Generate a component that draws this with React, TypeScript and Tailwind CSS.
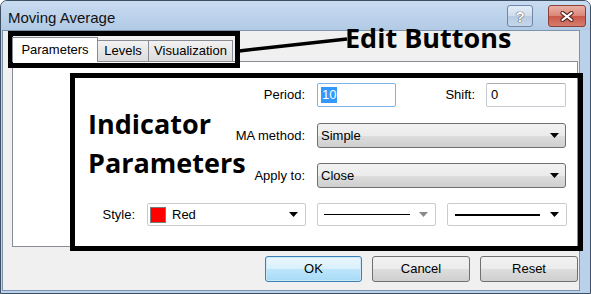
import type { ReactNode } from 'react';

const winBtn =
  'bg-[linear-gradient(#f2f2f2_0%,#ebebeb_50%,#dddddd_51%,#cfcfcf_100%)] border border-[#707070] rounded-[3px]';

function Arrow({ color = '#000' }: { color?: string }) {
  return (
    <svg width="9" height="5" viewBox="0 0 9 5" className="shrink-0">
      <path d="M0 0 H9 L4.5 5 Z" fill={color} />
    </svg>
  );
}

function Combo({ children, width }: { children: ReactNode; width: string }) {
  return (
    <div className={`${width} h-[25px] ${winBtn} flex items-center pl-[3px] pr-[6px] text-[13px] text-black`}>
      <span className="flex-1">{children}</span>
      <Arrow />
    </div>
  );
}

function StyleBox({ children, width, arrow }: { children: ReactNode; width: string; arrow?: string }) {
  return (
    <div className={`${width} h-[23px] bg-white border border-[#c8cbd0] rounded-[2px] flex items-center pl-[2px] pr-[7px]`}>
      <div className="flex-1 flex items-center">{children}</div>
      <Arrow color={arrow} />
    </div>
  );
}

function Button({ label, primary }: { label: string; primary?: boolean }) {
  return (
    <button
      className={
        primary
          ? 'w-[97px] h-[26px] rounded-[3px] border border-[#3c7fb1] bg-[linear-gradient(#eaf6fd_0%,#d9f0fc_50%,#bee6fd_51%,#a7d9f5_100%)] shadow-[inset_0_0_0_1px_#c9e9fb] text-[13px] text-black'
          : `w-[98px] h-[26px] ${winBtn} text-[13px] text-black`
      }
    >
      {label}
    </button>
  );
}

export default function App() {
  return (
    <div className="relative w-[591px] h-[294px] bg-[#b9d1ea] border border-[#3f4f63] rounded-t-[7px] flex flex-col overflow-hidden font-['Liberation_Sans',Arial,sans-serif]">
      {/* Title bar */}
      <div className="h-[29px] flex bg-linear-to-b from-[#c8dcf1] to-[#b2cae5]">
        <span className="pl-[7px] pt-[9px] leading-[15px] text-[15px] text-[#111]">Moving Average</span>
        <div className="ml-auto mr-[4px] mt-[4px] flex gap-[15px]">
          <div className="w-[26px] h-[22px] rounded-[3px] border border-[#6f88a8] bg-[linear-gradient(#e4edf7_0%,#cfdcec_50%,#b8cbe2_51%,#c6d6ea_100%)] flex items-center justify-center">
            <span className="text-[15px] font-bold leading-none text-white [text-shadow:0_0_1px_#333,0_0_1px_#333]">?</span>
          </div>
          <div className="w-[38px] h-[22px] rounded-[3px] border border-[#8c3e33] bg-[linear-gradient(#eab1a6_0%,#d98577_50%,#c9584a_51%,#d57c6e_100%)] flex items-center justify-center">
            <svg width="14" height="11" viewBox="0 0 14 11">
              <path d="M2.5 2 L11.5 9 M11.5 2 L2.5 9" stroke="#5b2620" strokeWidth="4.2" strokeLinecap="round" />
              <path d="M2.5 2 L11.5 9 M11.5 2 L2.5 9" stroke="#fff" strokeWidth="2.2" strokeLinecap="round" />
            </svg>
          </div>
        </div>
      </div>

      {/* Dialog body */}
      <div className="flex-1 ml-[1px] mr-[10px] mb-[2px] bg-[#f0f0f0] border border-[#7d93ad] flex flex-col pl-[9px] pr-[1px] pt-[6px]">
        {/* Tabs */}
        <div className="h-[24px] flex items-end text-[13px] text-black">
          <div className="relative z-10 w-[86px] h-[25px] -mb-[1px] bg-white border border-b-0 border-[#898c95] flex items-center justify-center">
            Parameters
          </div>
          <div className="w-[51px] h-[21px] bg-linear-to-b from-[#f2f2f2] to-[#dcdcdc] border-t border-r border-[#898c95] flex items-center justify-center">
            Levels
          </div>
          <div className="w-[84px] h-[21px] bg-linear-to-b from-[#f2f2f2] to-[#dcdcdc] border-t border-r border-[#898c95] flex items-center justify-center">
            Visualization
          </div>
        </div>

        {/* Panel */}
        <div className="h-[186px] bg-white border border-[#898c95] flex flex-col pt-[21px] text-[13px] text-black">
          <div className="flex items-center h-[24px]">
            <span className="w-[292px] text-right">Period:</span>
            <div className="ml-[12px] w-[79px] h-[24px] border border-[#7eb4ea] rounded-[2px] flex items-center pl-[3px]">
              <span className="bg-[#3399ff] text-white leading-[16px] px-[1px]">10</span>
            </div>
            <span className="w-[79px] text-right">Shift:</span>
            <div className="ml-[11px] w-[80px] h-[24px] border border-[#c5cad1] border-t-[#abadb3] rounded-[2px] flex items-center pl-[4px]">
              0
            </div>
          </div>

          <div className="flex items-center mt-[16px]">
            <span className="w-[292px] text-right">MA method:</span>
            <div className="ml-[12px]">
              <Combo width="w-[249px]">Simple</Combo>
            </div>
          </div>

          <div className="flex items-center mt-[15px]">
            <span className="w-[292px] text-right">Apply to:</span>
            <div className="ml-[12px]">
              <Combo width="w-[249px]">Close</Combo>
            </div>
          </div>

          <div className="flex items-center mt-[15px]">
            <span className="w-[122px] text-right">Style:</span>
            <div className="ml-[12px]">
              <StyleBox width="w-[159px]">
                <span className="w-[16px] h-[16px] bg-[#ff0000] border border-[#7a7a7a]" />
                <span className="ml-[6px]">Red</span>
              </StyleBox>
            </div>
            <div className="ml-[11px]">
              <StyleBox width="w-[119px]" arrow="#8a8a8a">
                <span className="ml-[4px] w-[86px] h-[1px] bg-black" />
              </StyleBox>
            </div>
            <div className="ml-[11px]">
              <StyleBox width="w-[120px]">
                <span className="ml-[5px] w-[85px] h-[2px] bg-black" />
              </StyleBox>
            </div>
          </div>
        </div>

        {/* Buttons */}
        <div className="mt-[9px] flex justify-end gap-[10px]">
          <Button label="OK" primary />
          <Button label="Cancel" />
          <Button label="Reset" />
        </div>
      </div>

      {/* Annotation overlays */}
      <div className="absolute left-[7px] top-[30px] w-[232px] h-[37px] border-[5px] border-black" />
      <svg className="absolute left-[236px] top-[34px]" width="112" height="20" viewBox="0 0 112 20">
        <path d="M2 16 L110 4" stroke="#000" strokeWidth="3.5" />
      </svg>
      <div className="absolute left-[344px] top-[23px] text-[27px] leading-[27px] font-bold text-black font-['Open_Sans',sans-serif]">
        Edit Buttons
      </div>
      <div className="absolute left-[69px] top-[72px] w-[513px] h-[178px] border-[5px] border-black" />
      <div className="absolute left-[87px] top-[103px] text-[27px] leading-[39px] font-bold text-black font-['Open_Sans',sans-serif]">
        Indicator
        <br />
        Parameters
      </div>
    </div>
  );
}
